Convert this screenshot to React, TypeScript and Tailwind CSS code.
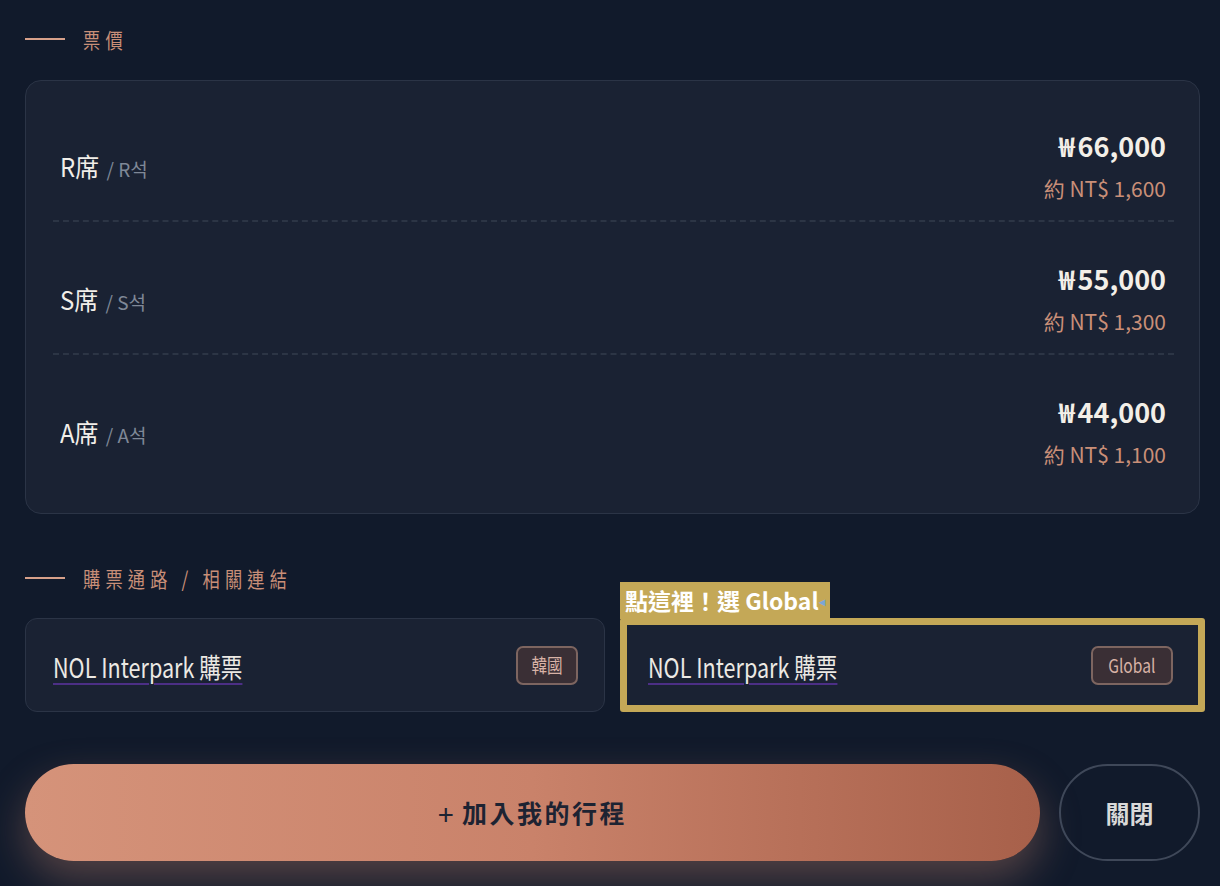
import React from 'react';

const prices = [
  { seat: 'R席', kr: 'R석', won: '66,000', ntd: '1,600' },
  { seat: 'S席', kr: 'S석', won: '55,000', ntd: '1,300' },
  { seat: 'A席', kr: 'A석', won: '44,000', ntd: '1,100' },
];

function SectionTitle({ children }: { children: React.ReactNode }) {
  return (
    <div className="flex items-center gap-[18px] h-[22px]">
      <span className="block w-[40px] h-[2px] bg-[#d7a08a]" />
      <span className="inline-block origin-left scale-x-[0.82] whitespace-nowrap text-[21px] leading-[22px] tracking-[0.3em] text-[#c98f78]">
        {children}
      </span>
    </div>
  );
}

function LinkCard({ badge, badgeW }: { badge: string; badgeW: string }) {
  return (
    <div className="flex items-center justify-between h-[94px] rounded-[12px] border border-[#2b3446] bg-[#1a2233] pl-[27px] pr-[26px]">
      <span className="inline-block origin-left scale-x-[0.8] whitespace-nowrap text-[27px] leading-[32px] mt-[3px] text-[#ece9e4] underline decoration-[#4c2f86] decoration-2 underline-offset-[5px]">
        NOL Interpark 購票
      </span>
      <span
        className={`${badgeW} h-[39px] flex items-center justify-center rounded-[7px] border-2 border-[#7d6560] bg-[#3a2f35]`}
      >
        <span className="inline-block scale-x-[0.82] whitespace-nowrap text-[19px] text-[#d8b2a6]">{badge}</span>
      </span>
    </div>
  );
}

export default function App() {
  return (
    <div
      className="min-h-[886px] w-[1220px] bg-[#111a2b] pl-[25px] pr-[20px] pt-[28px] overflow-hidden"
      style={{ fontFamily: '"Noto Sans CJK TC", "Noto Sans", sans-serif' }}
    >
      <SectionTitle>票價</SectionTitle>

      <div className="mt-[30px] rounded-[16px] border border-[#2b3446] bg-[#1a2233] pl-[27px] pr-[25px] pt-[47px] pb-[44px]">
        {prices.map((p, i) => (
          <div
            key={p.seat}
            className={
              i < prices.length - 1
                ? 'flex items-center justify-between pl-[7px] pr-[8px] pb-[17px] mb-[39px] border-b-2 border-dashed border-[#2c3545]'
                : 'flex items-center justify-between pl-[7px] pr-[8px]'
            }
          >
            <div className="flex items-baseline gap-[8px]">
              <span className="inline-block origin-left scale-x-[0.92] text-[26px] text-[#f1eee9]">{p.seat}</span>
              <span className="ml-[-4px] text-[19px] text-[#7f8897]">/ {p.kr}</span>
            </div>
            <div className="flex flex-col items-end">
              <span className="text-[27px] leading-[36px] font-bold text-[#f3efe8]">
                <span className="mr-[3px]">₩</span>
                {p.won}
              </span>
              <span className="text-[21px] leading-[30px] mt-[9px] text-[#c98f78]">約 NT$ {p.ntd}</span>
            </div>
          </div>
        ))}
      </div>

      <div className="mt-[53px]">
        <SectionTitle>購票通路 / 相關連結</SectionTitle>
      </div>

      <div className="mt-[29px] grid grid-cols-[580px_1fr] gap-[15px]">
        <LinkCard badge="韓國" badgeW="w-[62px]" />
        <div className="relative">
          <LinkCard badge="Global" badgeW="w-[82px]" />
          <div className="absolute left-0 right-[-5px] top-0 bottom-0 border-[7px] border-[#c4a857] rounded-[3px] pointer-events-none" />
          <div className="absolute left-0 top-[-36px] h-[37px] w-[210px] bg-[#c4a857] flex items-center pl-[5px] text-[23px] font-bold text-white whitespace-nowrap">
            點這裡！選 Global<span className="text-[12px] text-[#7aa6d6]">◂</span>
          </div>
        </div>
      </div>

      <div className="mt-[52px] flex gap-[19px]">
        <button className="flex-1 h-[97px] rounded-full bg-gradient-to-r from-[#d5937a] via-[#c9826a] to-[#a7604a] shadow-[0_18px_40px_rgba(208,140,115,0.35)] text-[25px] font-bold tracking-[0.1em] text-[#1d2332] flex items-center justify-center">
          <span className="font-normal text-[28px] mr-[6px]">+</span>加入我的行程
        </button>
        <button className="w-[141px] h-[97px] rounded-full border-2 border-[#3f4859] text-[24px] font-bold text-[#d9d9d9] flex items-center justify-center">
          關閉
        </button>
      </div>
    </div>
  );
}
